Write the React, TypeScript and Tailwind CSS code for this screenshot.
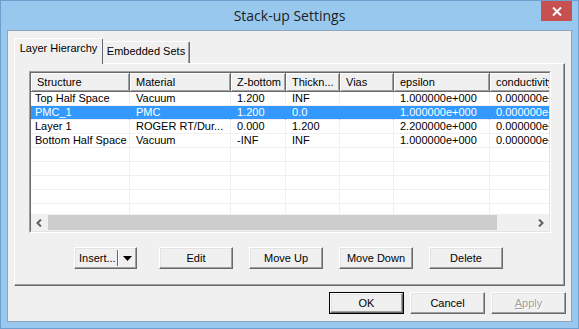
import React from 'react';

const columns = [
  { label: 'Structure', w: 'w-[99px]' },
  { label: 'Material', w: 'w-[101px]' },
  { label: 'Z-bottom', w: 'w-[55px]' },
  { label: 'Thickn...', w: 'w-[54px]' },
  { label: 'Vias', w: 'w-[54px]' },
  { label: 'epsilon', w: 'w-[96px]' },
  { label: 'conductivity', w: 'w-[100px]' },
];

const rows = [
  ['Top Half Space', 'Vacuum', '1.200', 'INF', '', '1.000000e+000', '0.000000e+000'],
  ['PMC_1', 'PMC', '1.200', '0.0', '', '1.000000e+000', '0.000000e+000'],
  ['Layer 1', 'ROGER RT/Dur...', '0.000', '1.200', '', '2.200000e+000', '0.000000e+000'],
  ['Bottom Half Space', 'Vacuum', '-INF', 'INF', '', '1.000000e+000', '0.000000e+000'],
  ['', '', '', '', '', '', ''],
  ['', '', '', '', '', '', ''],
  ['', '', '', '', '', '', ''],
  ['', '', '', '', '', '', ''],
  ['', '', '', '', '', '', ''],
];

function Button({ w, isDefault, children }: { w: string; isDefault?: boolean; children: React.ReactNode }) {
  const face = (
    <div className="h-full w-full flex items-center justify-center bg-[#f0f0f0] border-t border-l border-white border-r border-b border-r-[#696969] border-b-[#696969] shadow-[inset_-1px_-1px_0_#a0a0a0,inset_1px_1px_0_#e3e3e3]">
      {children}
    </div>
  );
  return (
    <div className={`${w} h-[22px] shrink-0 ${isDefault ? 'border border-black' : ''}`}>
      {face}
    </div>
  );
}

export default function App() {
  return (
    <div className="w-[579px] h-[329px] bg-[#99c8ee] border border-[#6e9fcf] flex flex-col font-['Liberation_Sans',Arial,sans-serif] text-[11px] text-black overflow-hidden">
      {/* Title bar */}
      <div className="h-[29px] grid grid-cols-[1fr_auto_1fr] items-start">
        <div />
        <div className="pt-[5px] font-['Open_Sans',sans-serif] text-[14px] leading-[19px] text-[#1e1e1e]">
          Stack-up Settings
        </div>
        <div className="justify-self-end mr-[6px] w-[31px] h-[20px] bg-[#c75050] flex items-center justify-center">
          <svg width="10" height="9" viewBox="0 0 10 9">
            <path d="M1 0.5 L9 8.5 M9 0.5 L1 8.5" stroke="white" strokeWidth="2" />
          </svg>
        </div>
      </div>

      {/* Client area */}
      <div className="mx-[6px] h-[292px] border border-[#8da5bd] bg-[#f0f0f0] flex flex-col">
        <div className="pl-[6px] pt-[7px] flex flex-col">
          {/* Tabs */}
          <div className="h-[25px] flex items-end">
            <div className="relative z-10 -mb-px w-[89px] h-[26px] bg-[#f0f0f0] border-t border-l border-white border-r border-r-[#696969] rounded-tl-[2px] rounded-tr-[2px] flex justify-center pt-[3px]">
              <span className="leading-[13px]">Layer Hierarchy</span>
            </div>
            <div className="w-[87px] h-[22px] bg-[#f0f0f0] border-t border-white border-r border-r-[#696969] shadow-[inset_-1px_0_0_#a0a0a0] rounded-tr-[2px] flex justify-center pt-[3px]">
              <span className="leading-[13px]">Embedded Sets</span>
            </div>
          </div>

          {/* Tab panel */}
          <div className="w-[551px] h-[223px] border-t border-l border-white border-r border-b border-r-[#696969] border-b-[#696969] shadow-[inset_-1px_-1px_0_#a0a0a0] flex flex-col">
            {/* List view */}
            <div className="ml-[14px] mt-[7px] w-[522px] h-[162px] border-t border-l border-[#a0a0a0] border-r border-b border-r-white border-b-white">
              <div className="h-full w-full border-t border-l border-[#696969] border-r border-b border-r-[#e3e3e3] border-b-[#e3e3e3] bg-white flex flex-col overflow-hidden">
                {/* Header */}
                <div className="h-[19px] flex shrink-0 overflow-hidden">
                  {columns.map((c) => (
                    <div
                      key={c.label}
                      className={`${c.w} shrink-0 h-full bg-[#f0f0f0] border-r border-b border-[#696969] shadow-[inset_1px_1px_0_#fff,inset_-1px_-1px_0_#a0a0a0] pl-[6px] flex items-center whitespace-nowrap overflow-hidden`}
                    >
                      {c.label}
                    </div>
                  ))}
                </div>

                {/* Rows */}
                <div className="h-[122px] overflow-hidden shrink-0">
                  {rows.map((r, ri) => {
                    const sel = ri === 1;
                    return (
                      <div key={ri} className={`h-[14px] flex ${sel ? 'bg-[#3399ff] text-white' : ''}`}>
                        {r.map((cell, ci) => (
                          <div
                            key={ci}
                            className={`${columns[ci].w} shrink-0 h-full border-b border-b-[#f0f0f0] border-r ${sel ? 'border-r-[#3399ff]' : 'border-r-[#f0f0f0]'} ${ci === 0 ? 'pl-[4px]' : 'pl-[6px]'} leading-[13px] whitespace-nowrap overflow-hidden`}
                          >
                            {cell}
                          </div>
                        ))}
                      </div>
                    );
                  })}
                </div>

                {/* Horizontal scrollbar */}
                <div className="h-[17px] bg-[#f0f0f0] flex items-center shrink-0">
                  <div className="w-[17px] h-full flex items-center justify-center">
                    <svg width="7" height="8" viewBox="0 0 7 8">
                      <path d="M5 0.5 L1.5 4 L5 7.5" stroke="#606060" strokeWidth="2" fill="none" />
                    </svg>
                  </div>
                  <div className="w-[449px] h-[15px] bg-[#cdcdcd]" />
                  <div className="flex-1" />
                  <div className="w-[17px] h-full flex items-center justify-center">
                    <svg width="7" height="8" viewBox="0 0 7 8">
                      <path d="M2 0.5 L5.5 4 L2 7.5" stroke="#606060" strokeWidth="2" fill="none" />
                    </svg>
                  </div>
                </div>
              </div>
            </div>

            {/* Panel buttons */}
            <div className="mt-[14px] ml-[59px] flex items-center">
              <div className="w-[63px] h-[22px] shrink-0 bg-[#f0f0f0] border-t border-l border-white border-r border-b border-r-[#696969] border-b-[#696969] shadow-[inset_-1px_-1px_0_#a0a0a0,inset_1px_1px_0_#e3e3e3] flex items-center">
                <span className="pl-[4px] w-[42px]">Insert...</span>
                <div className="w-px h-[16px] bg-[#696969] shadow-[1px_0_0_#fff]" />
                <div className="flex-1 flex justify-center">
                  <svg width="9" height="5" viewBox="0 0 9 5">
                    <path d="M0 0 H9 L4.5 5 Z" fill="black" />
                  </svg>
                </div>
              </div>
              <div className="ml-[22px]">
                <Button w="w-[74px]">Edit</Button>
              </div>
              <div className="ml-[16px]">
                <Button w="w-[74px]">Move Up</Button>
              </div>
              <div className="ml-[16px]">
                <Button w="w-[74px]">Move Down</Button>
              </div>
              <div className="ml-[16px]">
                <Button w="w-[74px]">Delete</Button>
              </div>
            </div>
          </div>
        </div>

        {/* Dialog buttons */}
        <div className="mt-[6px] pr-[5px] flex justify-end gap-[6px]">
          <Button w="w-[75px]" isDefault>
            OK
          </Button>
          <Button w="w-[75px]">Cancel</Button>
          <Button w="w-[75px]">
            <span className="text-[#a0a0a0] [text-shadow:1px_1px_0_#fff]">
              <span className="underline">A</span>pply
            </span>
          </Button>
        </div>
      </div>
    </div>
  );
}
